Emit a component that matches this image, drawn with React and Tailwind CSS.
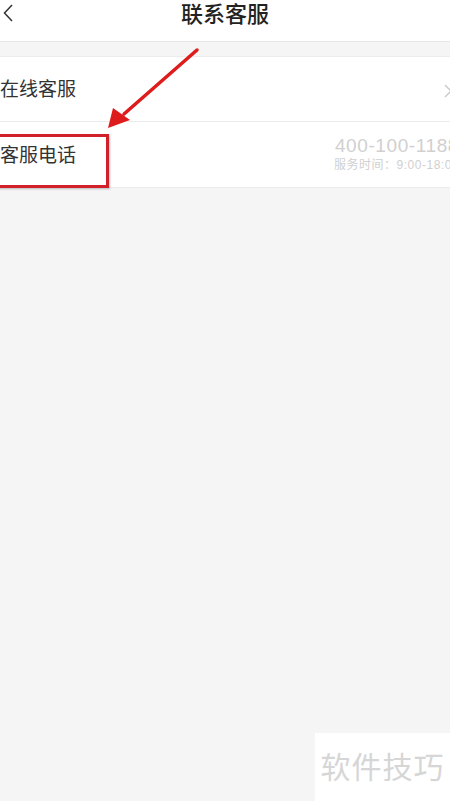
import React from "react";

const font = { fontFamily: '"Liberation Sans", "Noto Sans CJK SC", sans-serif' };

const Row = ({ label, right, border }) => (
  <div className={`flex h-[65px] items-center justify-between px-[15px] ${border ? "border-b border-[#ececec]" : ""}`}>
    <span className="mt-[3px] text-[19px] text-[#333]">{label}</span>
    {right}
  </div>
);

const App = () => {
  return (
    <div className="relative h-[801px] w-[450px] overflow-hidden bg-[#f5f5f5]" style={font}>
      <div className="-ml-[15px] w-[480px]">
        {/* Header */}
        <div className="relative flex h-[42px] items-center justify-center border-b border-[#e6e6e6] bg-white">
          <svg className="absolute left-[18px] top-[4px]" width="10" height="18" viewBox="0 0 10 18">
            <path d="M9 1 L1.5 9 L9 17" fill="none" stroke="#333" strokeWidth="1.5" />
          </svg>
          <h1 className="-mt-[13px] text-[22px] font-medium text-[#222]">联系客服</h1>
        </div>

        {/* List */}
        <div className="mt-[14px] border-y border-[#ececec] bg-white">
          <Row
            label="在线客服"
            border
            right={
              <svg width="8" height="14" viewBox="0 0 8 14" className="-mr-[2px] mt-[3px]">
                <path d="M1 1 L7 7 L1 13" fill="none" stroke="#c8c8c8" strokeWidth="1.4" />
              </svg>
            }
          />
          <Row
            label="客服电话"
            right={
              <div className="-mr-[9px] flex flex-col items-end text-[#d0d0d0]">
                <span className="text-[19px] leading-[22px] tracking-[0.6px]">400-100-1188</span>
                <span className="text-[12px] leading-[17px] tracking-[0.5px]">服务时间：9:00-18:00</span>
              </div>
            }
          />
        </div>
      </div>

      {/* Annotation: red box */}
      <div className="absolute left-[-4px] top-[134px] h-[54px] w-[113px] border-[3px] border-[#d1202a] shadow-[1px_1px_2px_rgba(0,0,0,0.25)]" />

      {/* Annotation: arrow */}
      <svg className="absolute left-0 top-0" width="450" height="200" viewBox="0 0 450 200">
        <line x1="197" y1="50" x2="124" y2="114" stroke="#de1c1c" strokeWidth="3.5" strokeLinecap="round" />
        <polygon points="108,128 113,108 130,120" fill="#de1c1c" />
      </svg>

      {/* Watermark */}
      <div className="absolute bottom-0 right-0 flex h-[68px] w-[135px] items-center justify-center bg-white">
        <span className="text-[30px] tracking-[1px] text-[#d6d6d6]">软件技巧</span>
      </div>
    </div>
  );
};

export default App;
